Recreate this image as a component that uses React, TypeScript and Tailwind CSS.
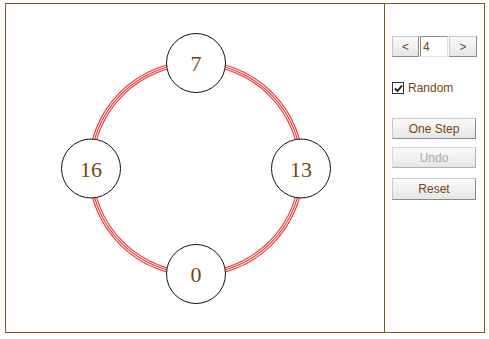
import React from "react";

const nodes = [
  { label: "7", x: 190, y: 59 },
  { label: "13", x: 295, y: 164.5 },
  { label: "0", x: 190, y: 270 },
  { label: "16", x: 85, y: 164.5 },
];

const btn =
  "h-[21px] border border-[#c8c8c8] border-b-[#8a8a8a] border-r-[#8a8a8a] bg-gradient-to-b from-[#fafafa] to-[#e6e6e6] text-[12px] leading-none text-[#7a4510]";

export default function App() {
  return (
    <div className="pl-[5px] pt-[3px] font-['Liberation_Sans',Arial,sans-serif]">
      <div className="flex h-[330px] w-[480px] border border-[#7a5a22] bg-white">
        {/* ring diagram */}
        <div className="h-full w-[379px] border-r border-[#7a5a22]">
          <svg width="378" height="328" viewBox="0 0 378 328">
            {[103.5, 105.5, 107.5].map((r) => (
              <circle key={r} cx="190" cy="164.5" r={r} fill="none" stroke="#ee3030" strokeWidth="1.1" />
            ))}
            {nodes.map((n) => (
              <g key={n.label}>
                <circle cx={n.x} cy={n.y} r="29.5" fill="white" stroke="#111" strokeWidth="1" />
                <text
                  x={n.x}
                  y={n.y + 8}
                  textAnchor="middle"
                  fontFamily="'Liberation Serif', 'Times New Roman', serif"
                  fontSize="22"
                  fill="#7a4510"
                >
                  {n.label}
                </text>
              </g>
            ))}
          </svg>
        </div>

        {/* controls */}
        <div className="flex flex-1 flex-col pl-[7px] pt-[32px]">
          <div className="flex h-[21px] items-stretch gap-[1px]">
            <button className={`${btn} w-[27px]`}>&lt;</button>
            <div className="flex w-[28px] items-center border border-[#8a8a8a] border-b-[#e0e0e0] border-r-[#e0e0e0] bg-white pl-[2px] text-[12px] text-[#7a4510]">
              4
            </div>
            <button className={`${btn} w-[28px]`}>&gt;</button>
          </div>

          <label className="mt-[22px] flex items-center gap-[4px] text-[12px] text-[#7a4510]">
            <span className="flex h-[12px] w-[12px] items-center justify-center border border-[#333] bg-white">
              <svg width="9" height="9" viewBox="0 0 9 9">
                <path d="M1 4.5 L3.5 7 L8 1.5" fill="none" stroke="#111" strokeWidth="1.8" />
              </svg>
            </span>
            Random
          </label>

          <div className="mt-[21px] flex w-[84px] flex-col">
            <button className={`${btn} w-[84px]`}>One Step</button>
            <button className={`${btn} mt-[8px] w-[84px] border-[#d8d8d8] border-b-[#b0b0b0] border-r-[#b0b0b0] text-[#a8a8a8]`}>Undo</button>
            <button className={`${btn} mt-[10px] h-[22px] w-[84px]`}>Reset</button>
          </div>
        </div>
      </div>
    </div>
  );
}
